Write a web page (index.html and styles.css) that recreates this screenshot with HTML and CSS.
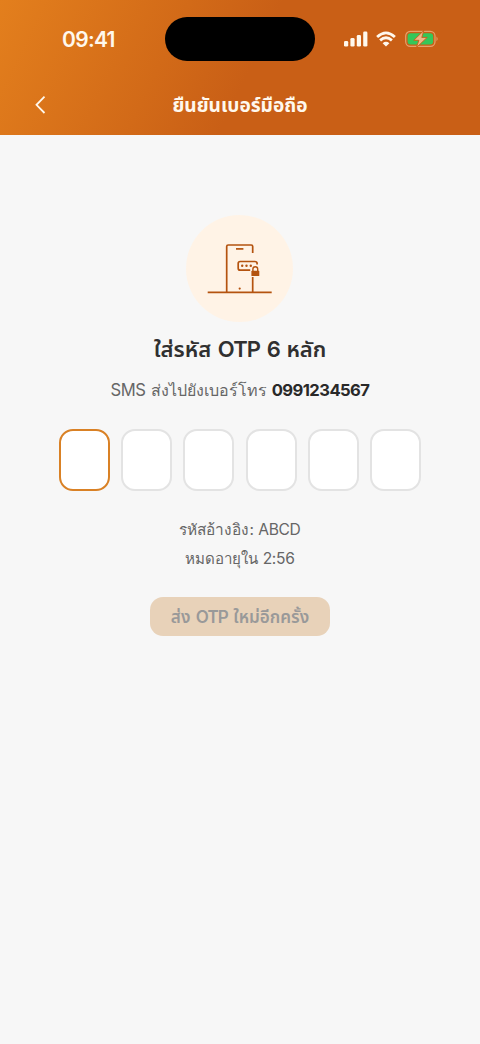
FILE: index.html
```html
<!DOCTYPE html>
<html lang="th">
<head>
<meta charset="utf-8">
<title>ยืนยันเบอร์มือถือ</title>
<link rel="stylesheet" href="styles.css">
</head>
<body>
<header class="header">
  <div class="status">
    <span class="time">09:41</span>
    <span class="island"></span>
    <svg class="indicators" width="96" height="18" viewBox="0 0 96 18">
      <g fill="#fff8ed">
        <rect x="1" y="11" width="4.2" height="5.5" rx="1.3"/>
        <rect x="7.4" y="8" width="4.2" height="8.5" rx="1.3"/>
        <rect x="13.8" y="5" width="4.2" height="11.5" rx="1.3"/>
        <rect x="20.2" y="1.5" width="4.2" height="15" rx="1.3"/>
        <path d="M43 16.6 L39.6 13.2 Q43 10.3 46.4 13.2Z"/>
      </g>
      <g fill="none" stroke="#fff8ed" stroke-width="2.8">
        <path d="M34.1 7 Q43 -1.2 51.9 7"/>
        <path d="M37.1 10.4 Q43 5.2 48.9 10.4"/>
      </g>
      <rect x="62.7" y="1.4" width="29.3" height="15" rx="4.6" fill="none" stroke="#e5a16b" stroke-width="1.2"/>
      <rect x="64.6" y="3.3" width="25.5" height="11.2" rx="2.9" fill="#34c759"/>
      <path d="M93.5 6.5 Q95.8 8.9 93.5 11.3Z" fill="#e5a16b"/>
      <path d="M80.9 .4 L70.8 10.3 H75.9 L73.4 17.6 L84.2 7.4 H78.8Z" fill="#efb788" stroke="#c95f17" stroke-width=".9"/>
    </svg>
  </div>
  <div class="nav">
    <svg class="back" width="14" height="20" viewBox="0 0 14 20"><path d="M11.5 1.6 L3.5 9.8 L11.5 18" fill="none" stroke="#fff8ed" stroke-width="1.8"/></svg>
    <h1 class="nav-title">ยืนยันเบอร์มือถือ</h1>
  </div>
</header>
<main class="content">
  <div class="badge">
    <svg width="107" height="107" viewBox="0.3 0 107 107" fill="none" stroke="#b4530f" stroke-width="1.7">
      <path d="M21 77.3 H85"/>
      <path d="M40 77 V31.5 Q40 30 41.5 30 H64.5 Q66 30 66 31.5 V38 M66 62 V77"/>
      <path d="M49.3 33.9 H56.7"/>
      <path d="M63.5 55.2 H53.5 Q51.5 55.2 51.5 53.2 V48.5 Q51.5 46.5 53.5 46.5 H68 Q70.4 46.5 70.4 48.5 V49.5"/>
      <path d="M66.2 57 V54 Q66.2 51.7 68.6 51.7 Q71 51.7 71 54 V57" stroke-width="1.4"/>
      <g fill="#b4530f" stroke="none">
        <rect x="64.7" y="55.8" width="7.9" height="5.3" rx=".7"/>
        <circle cx="55.5" cy="50.7" r="1.2"/>
        <circle cx="59.8" cy="50.7" r="1.2"/>
        <circle cx="64.1" cy="50.7" r="1.2"/>
        <circle cx="53" cy="73.6" r="1.1"/>
      </g>
    </svg>
  </div>
  <h2 class="heading">ใส่รหัส <span class="tight">OTP</span> 6 หลัก</h2>
  <p class="sent"><span class="sms">SMS</span> ส่งไปยังเบอร์โทร <strong class="phone">0991234567</strong></p>
  <div class="otp">
    <span class="digit active"></span><span class="digit"></span><span class="digit"></span><span class="digit"></span><span class="digit"></span><span class="digit"></span>
  </div>
  <p class="note">รหัสอ้างอิง: <span class="code">ABCD</span></p>
  <p class="note expiry">หมดอายุใน <span class="count">2:56</span></p>
  <button class="resend" disabled>ส่ง <span class="tight">OTP</span> ใหม่อีกครั้ง</button>
</main>
</body>
</html>
```
FILE: styles.css
```css
* { box-sizing: border-box; }
body {
  margin: 0;
  min-height: 1044px;
  background: #f7f7f7;
  font-family: Inter, "Noto Sans Thai", Loma, sans-serif;
}
h1, h2, p { margin: 0; white-space: nowrap; }
.header {
  height: 135px;
  color: #fff8ed;
  background: linear-gradient(116deg, #e37f1d 0%, #d26a18 35%, #c95f16 52%, #c95f16 100%);
}
.status {
  display: grid;
  grid-template-columns: 165px 150px 165px;
  align-items: center;
  height: 78px;
}
.time { padding: 2px 0 0 62px; font-size: 21px; font-weight: 600; line-height: 24px; letter-spacing: -0.7px; }
.island { height: 44px; border-radius: 22px; background: #000; }
.indicators { margin-left: 28px; }
.nav {
  display: grid;
  grid-template-columns: 80px 320px 80px;
  align-items: center;
  height: 54px;
}
.back { margin-left: 33px; }
.nav-title { text-align: center; font-size: 19.1px; font-weight: 700; line-height: 28px; }
.content { display: flex; flex-direction: column; align-items: center; padding-top: 80px; }
.badge { width: 107px; height: 107px; margin-left: -1px; border-radius: 50%; background: #fff3e6; }
.badge svg { display: block; margin-left: 0.5px; }
.heading { margin-top: 9px; font-size: 22px; font-weight: 600; line-height: 36px; color: #303030; }
.tight { letter-spacing: -0.8px; margin: 0 1px; }
.sent { height: 28px; margin-top: 9px; font-family: Inter, sans-serif; font-size: 16px; line-height: 28px; color: #666; }
.sms { margin-right: 1px; font-size: 16.6px; letter-spacing: -0.4px; }
.phone { font-size: 16.6px; font-weight: 650; letter-spacing: -0.55px; color: #292929; }
.otp { display: flex; gap: 11.2px; margin-top: 25px; }
.digit { width: 51px; height: 62px; border: 2px solid #e3e3e3; border-radius: 14px; background: #fff; }
.active { border-color: #d98125; }
.note { height: 28px; margin-top: 25px; font-family: Inter, sans-serif; font-size: 15.4px; line-height: 28px; color: #666; }
.code { font-size: 15.6px; letter-spacing: -0.3px; }
.expiry { margin-top: 1px; font-size: 15.1px; }
.count { font-size: 15.6px; letter-spacing: -0.3px; }
.resend {
  width: 180px;
  height: 39px;
  margin-top: 24px;
  padding: 0;
  border: 0;
  border-radius: 13px;
  background: #e8d2b9;
  color: #999;
  font: 600 17px/28px Inter, "Noto Sans Thai", Loma, sans-serif;
  white-space: nowrap;
}
```
